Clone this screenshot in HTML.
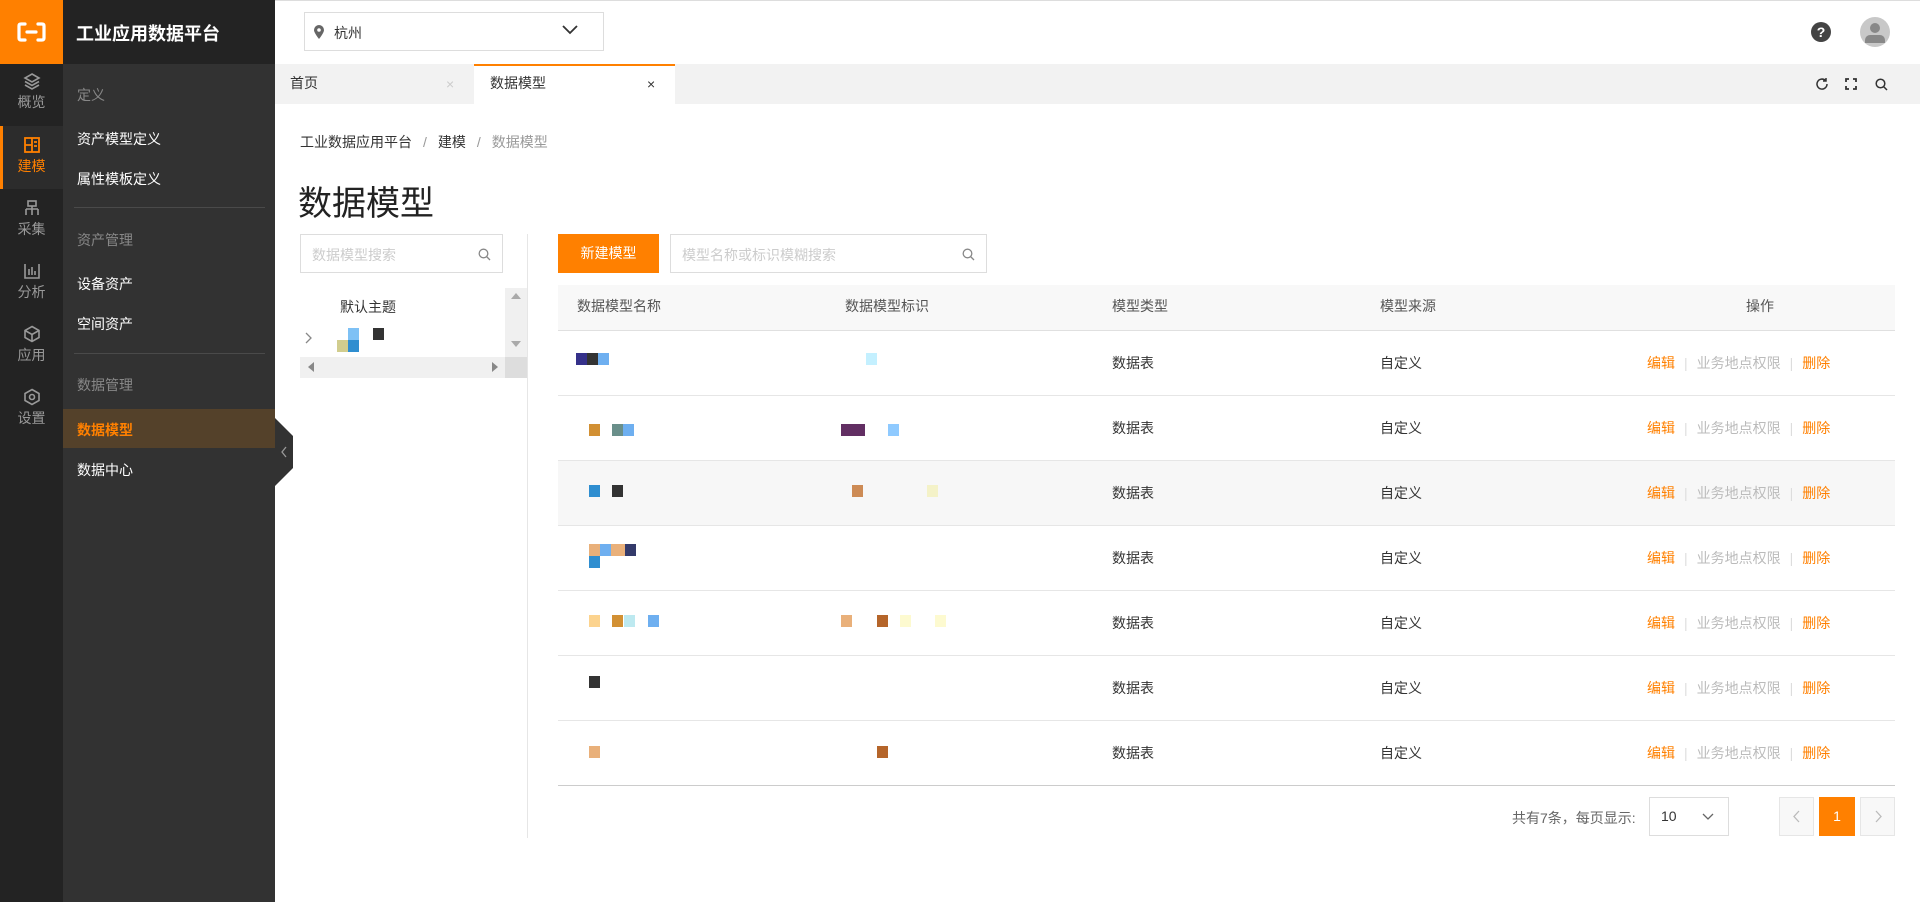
<!DOCTYPE html>
<html><head><meta charset="utf-8"><style>
*{margin:0;padding:0;box-sizing:border-box}
body{width:1920px;height:902px;position:relative;overflow:hidden;background:#fff;font-family:"Liberation Sans","Noto Sans CJK SC",sans-serif;font-size:14px;color:#333}
.a{position:absolute}
.ic{position:absolute;left:0;width:63px;text-align:center;color:#999;font-size:14px}
.ic svg{display:block;margin:0 auto 2px}
.nv{position:absolute;left:77px;color:#fff;font-size:14px}
.gl{position:absolute;left:77px;color:#888;font-size:14px}
.row{position:absolute;left:558px;width:1337px;height:65px;border-bottom:1px solid #e6e6e6}
.row span{position:absolute;top:22px}
.o{color:#ff8000;font-weight:normal}.g{color:#bbb;font-weight:normal}.sep{color:#ddd;margin:0 9px;font-style:normal}
.blk{position:absolute;width:11px;height:12px}
</style></head><body>
<div class="a" style="left:0;top:0;width:63px;height:902px;background:#232323"></div>
<div class="a" style="left:63px;top:0;width:212px;height:902px;background:#323232"></div>
<div class="a" style="left:63px;top:0;width:212px;height:64px;background:#232323"></div>
<div class="a" style="left:0;top:0;width:63px;height:64px;background:#ff8000"></div>
<svg class="a" style="left:16px;top:21px" width="31" height="22" viewBox="0 0 31 22"><path d="M9 3H5Q3 3 3 5V17Q3 19 5 19H9M22 3H26Q28 3 28 5V17Q28 19 26 19H22M11 11H20" stroke="#fff" stroke-width="3.2" fill="none" stroke-linecap="round"/></svg>
<div class="a" style="left:76px;top:20px;color:#fff;font-size:18px;font-weight:bold">工业应用数据平台</div>

<div class="ic" style="top:72px"><svg width="18" height="18" viewBox="0 0 18 18" fill="none" stroke="#999" stroke-width="1.6"><path d="M9 2L16 6L9 10L2 6Z"/><path d="M2 9.5L9 13.5L16 9.5M2 13L9 17L16 13"/></svg>概览</div>
<div class="a" style="left:0;top:126px;width:63px;height:63px;background:#2c2c2c;border-left:3px solid #ff8000"></div>
<div class="ic" style="top:136px;color:#ff8000"><svg width="18" height="18" viewBox="0 0 18 18" fill="none" stroke="#ff8000" stroke-width="1.8"><rect x="2" y="2" width="14" height="14"/><path d="M9 2V16M2 9H9M11 6H14M11 10H14"/></svg>建模</div>
<div class="ic" style="top:199px"><svg width="18" height="18" viewBox="0 0 18 18" fill="none" stroke="#999" stroke-width="1.6"><rect x="5" y="2" width="8" height="5"/><path d="M9 7V10M3 10H15M3 10V16M9 10V16M15 10V16"/></svg>采集</div>
<div class="ic" style="top:262px"><svg width="18" height="18" viewBox="0 0 18 18" fill="none" stroke="#999" stroke-width="1.6"><path d="M2 2V16H16V2M6 7V13M9 5V13M12 9V13"/></svg>分析</div>
<div class="ic" style="top:325px"><svg width="18" height="18" viewBox="0 0 18 18" fill="none" stroke="#999" stroke-width="1.6"><path d="M9 1.5L16 5.5V12.5L9 16.5L2 12.5V5.5Z M2 5.5L9 9.5L16 5.5M9 9.5V16.5"/></svg>应用</div>
<div class="ic" style="top:388px"><svg width="18" height="18" viewBox="0 0 18 18" fill="none" stroke="#999" stroke-width="1.6"><path d="M9 1.5L16 5.5V12.5L9 16.5L2 12.5V5.5Z"/><circle cx="9" cy="9" r="2.5"/></svg>设置</div>

<div class="gl" style="top:85px">定义</div>
<div class="nv" style="top:129px">资产模型定义</div>
<div class="nv" style="top:169px">属性模板定义</div>
<div class="a" style="left:74px;top:207px;width:191px;height:1px;background:#4a4a4a"></div>
<div class="gl" style="top:230px">资产管理</div>
<div class="nv" style="top:274px">设备资产</div>
<div class="nv" style="top:314px">空间资产</div>
<div class="a" style="left:74px;top:353px;width:191px;height:1px;background:#4a4a4a"></div>
<div class="gl" style="top:375px">数据管理</div>
<div class="a" style="left:63px;top:409px;width:212px;height:39px;background:#54412a"></div>
<div class="nv" style="top:420px;color:#ff8000;font-weight:bold">数据模型</div>
<div class="nv" style="top:460px">数据中心</div>
<svg class="a" style="left:275px;top:418px" width="20" height="68" viewBox="0 0 20 68"><path d="M0 0L18 18V50L0 68Z" fill="#323232"/><path d="M11 29L7 34L11 39" stroke="#999" stroke-width="1.3" fill="none"/></svg>

<div class="a" style="left:275px;top:0;width:1645px;height:1px;background:#ddd"></div>
<div class="a" style="left:304px;top:12px;width:300px;height:39px;border:1px solid #ddd"></div>
<svg class="a" style="left:314px;top:25px" width="10" height="14" viewBox="0 0 10 14"><path d="M5 0A5 5 0 0 0 0 5C0 8 5 14 5 14S10 8 10 5A5 5 0 0 0 5 0Z" fill="#666"/><circle cx="5" cy="5" r="1.8" fill="#fff"/></svg>
<div class="a" style="left:334px;top:23px;color:#333">杭州</div>
<svg class="a" style="left:562px;top:25px" width="16" height="10" viewBox="0 0 16 10"><path d="M1 1L8 8L15 1" stroke="#333" stroke-width="1.8" fill="none"/></svg>
<div class="a" style="left:1811px;top:22px;width:20px;height:20px;border-radius:50%;background:#444;color:#fff;font-weight:bold;font-size:14px;text-align:center;line-height:20px">?</div>
<div class="a" style="left:1860px;top:17px;width:30px;height:30px;border-radius:50%;background:#c8c8c8;overflow:hidden"><div class="a" style="left:10px;top:6px;width:10px;height:10px;border-radius:50%;background:#888"></div><div class="a" style="left:5px;top:18px;width:20px;height:8px;border-radius:5px 5px 0 0;background:#888"></div></div>

<div class="a" style="left:275px;top:64px;width:1645px;height:40px;background:#f2f2f2"></div>
<div class="a" style="left:290px;top:73px;color:#333">首页</div>
<div class="a" style="left:446px;top:76px;color:#ccc;font-size:14px">×</div>
<div class="a" style="left:474px;top:64px;width:201px;height:40px;background:#fff;border-top:2px solid #ff8000"></div>
<div class="a" style="left:490px;top:73px;color:#333">数据模型</div>
<div class="a" style="left:647px;top:76px;color:#333;font-size:14px">×</div>
<svg class="a" style="left:1815px;top:77px" width="14" height="14" viewBox="0 0 14 14" fill="none" stroke="#333" stroke-width="1.5"><path d="M12 7A5 5 0 1 1 10.5 3.5M11 1V4H8"/></svg>
<svg class="a" style="left:1845px;top:78px" width="12" height="12" viewBox="0 0 12 12" fill="none" stroke="#333" stroke-width="1.8"><path d="M1 4V1H4M8 1H11V4M11 8V11H8M4 11H1V8"/></svg>
<svg class="a" style="left:1875px;top:78px" width="13" height="13" viewBox="0 0 13 13" fill="none" stroke="#333" stroke-width="1.5"><circle cx="5.5" cy="5.5" r="4.3"/><path d="M8.5 8.5L12 12"/></svg>

<div class="a" style="left:300px;top:132px;color:#333">工业数据应用平台<span style="color:#999;margin:0 11px">/</span>建模<span style="color:#999;margin:0 11px">/</span><span style="color:#999">数据模型</span></div>
<div class="a" style="left:298px;top:176px;font-size:34px;color:#222">数据模型</div>

<div class="a" style="left:300px;top:234px;width:203px;height:39px;border:1px solid #ddd"></div>
<div class="a" style="left:312px;top:245px;color:#ccc">数据模型搜索</div>
<svg class="a" style="left:478px;top:248px" width="13" height="13" viewBox="0 0 13 13" fill="none" stroke="#888" stroke-width="1.3"><circle cx="5.5" cy="5.5" r="4.3"/><path d="M8.5 8.5L12 12"/></svg>
<div class="a" style="left:527px;top:234px;width:1px;height:604px;background:#e6e6e6"></div>
<div class="a" style="left:505px;top:288px;width:22px;height:90px;background:#f0f0f0"></div>
<div class="a" style="left:300px;top:357px;width:227px;height:21px;background:#f0f0f0"></div>
<div class="a" style="left:505px;top:357px;width:22px;height:21px;background:#ddd"></div>
<div class="a" style="left:511px;top:293px;border:5px solid transparent;border-bottom:6px solid #aaa;border-top:0"></div>
<div class="a" style="left:511px;top:341px;border:5px solid transparent;border-top:6px solid #aaa;border-bottom:0"></div>
<div class="a" style="left:308px;top:362px;border:5px solid transparent;border-right:6px solid #888;border-left:0"></div>
<div class="a" style="left:492px;top:362px;border:5px solid transparent;border-left:6px solid #888;border-right:0"></div>
<div class="a" style="left:340px;top:297px;color:#333">默认主题</div>
<svg class="a" style="left:305px;top:332px" width="8" height="12" viewBox="0 0 8 12"><path d="M1 1L6 6L1 11" stroke="#888" stroke-width="1.3" fill="none"/></svg>
<div class="blk" style="left:348px;top:328px;background:#7ec1f5"></div><div class="blk" style="left:373px;top:328px;background:#333"></div><div class="blk" style="left:337px;top:340px;background:#d1cd8e"></div><div class="blk" style="left:348px;top:340px;background:#2f8ed0"></div>

<div class="a" style="left:558px;top:234px;width:101px;height:39px;background:#ff8000;color:#fff;text-align:center;line-height:39px">新建模型</div>
<div class="a" style="left:670px;top:234px;width:317px;height:39px;border:1px solid #ddd"></div>
<div class="a" style="left:682px;top:245px;color:#ccc">模型名称或标识模糊搜索</div>
<svg class="a" style="left:962px;top:248px" width="13" height="13" viewBox="0 0 13 13" fill="none" stroke="#888" stroke-width="1.3"><circle cx="5.5" cy="5.5" r="4.3"/><path d="M8.5 8.5L12 12"/></svg>

<div class="a" style="left:558px;top:285px;width:1337px;height:46px;background:#f8f8f8;border-bottom:1px solid #e0e0e0"></div>
<div class="a" style="left:577px;top:296px;color:#555">数据模型名称</div>
<div class="a" style="left:845px;top:296px;color:#555">数据模型标识</div>
<div class="a" style="left:1112px;top:296px;color:#555">模型类型</div>
<div class="a" style="left:1380px;top:296px;color:#555">模型来源</div>
<div class="a" style="left:1746px;top:296px;color:#555">操作</div>

<div class="row" style="top:331px"><span style="left:554px">数据表</span><span style="left:822px">自定义</span><span style="left:1089px"><b class="o">编辑</b><i class="sep">|</i><b class="g">业务地点权限</b><i class="sep">|</i><b class="o">删除</b></span></div>
<div class="row" style="top:396px"><span style="left:554px">数据表</span><span style="left:822px">自定义</span><span style="left:1089px"><b class="o">编辑</b><i class="sep">|</i><b class="g">业务地点权限</b><i class="sep">|</i><b class="o">删除</b></span></div>
<div class="row" style="top:461px;background:#f7f7f7"><span style="left:554px">数据表</span><span style="left:822px">自定义</span><span style="left:1089px"><b class="o">编辑</b><i class="sep">|</i><b class="g">业务地点权限</b><i class="sep">|</i><b class="o">删除</b></span></div>
<div class="row" style="top:526px"><span style="left:554px">数据表</span><span style="left:822px">自定义</span><span style="left:1089px"><b class="o">编辑</b><i class="sep">|</i><b class="g">业务地点权限</b><i class="sep">|</i><b class="o">删除</b></span></div>
<div class="row" style="top:591px"><span style="left:554px">数据表</span><span style="left:822px">自定义</span><span style="left:1089px"><b class="o">编辑</b><i class="sep">|</i><b class="g">业务地点权限</b><i class="sep">|</i><b class="o">删除</b></span></div>
<div class="row" style="top:656px"><span style="left:554px">数据表</span><span style="left:822px">自定义</span><span style="left:1089px"><b class="o">编辑</b><i class="sep">|</i><b class="g">业务地点权限</b><i class="sep">|</i><b class="o">删除</b></span></div>
<div class="row" style="top:721px;border-bottom:1px solid #ccc"><span style="left:554px">数据表</span><span style="left:822px">自定义</span><span style="left:1089px"><b class="o">编辑</b><i class="sep">|</i><b class="g">业务地点权限</b><i class="sep">|</i><b class="o">删除</b></span></div>

<!-- pixel blocks -->
<div class="blk" style="left:576px;top:353px;background:#35318a"></div><div class="blk" style="left:587px;top:353px;background:#333"></div><div class="blk" style="left:598px;top:353px;background:#6eaff0"></div>
<div class="blk" style="left:866px;top:353px;background:#c4f0ff"></div>
<div class="blk" style="left:589px;top:424px;background:#d29033"></div><div class="blk" style="left:612px;top:424px;background:#6a8f8a"></div><div class="blk" style="left:623px;top:424px;background:#6eaff0"></div>
<div class="blk" style="left:841px;top:424px;width:24px;background:#622f63"></div><div class="blk" style="left:888px;top:424px;background:#8fcaff"></div>
<div class="blk" style="left:589px;top:485px;background:#2f8ed0"></div><div class="blk" style="left:612px;top:485px;background:#333"></div>
<div class="blk" style="left:852px;top:485px;background:#cd8b55"></div><div class="blk" style="left:927px;top:485px;background:#f4f2c8"></div>
<div class="blk" style="left:589px;top:544px;width:36px;background:#e9b07a"></div><div class="blk" style="left:600px;top:544px;background:#6eaff0"></div><div class="blk" style="left:625px;top:544px;background:#333a6a"></div><div class="blk" style="left:589px;top:556px;background:#2f8ed0"></div>
<div class="blk" style="left:589px;top:615px;background:#fcd38e"></div><div class="blk" style="left:612px;top:615px;background:#d29033"></div><div class="blk" style="left:624px;top:615px;background:#bde9f0"></div><div class="blk" style="left:648px;top:615px;background:#6eaff0"></div>
<div class="blk" style="left:841px;top:615px;background:#e9b07a"></div><div class="blk" style="left:877px;top:615px;background:#b5652a"></div><div class="blk" style="left:900px;top:615px;background:#fdfad0"></div><div class="blk" style="left:935px;top:615px;background:#fdfad0"></div>
<div class="blk" style="left:589px;top:676px;background:#333"></div>
<div class="blk" style="left:589px;top:746px;background:#e9b07a"></div><div class="blk" style="left:877px;top:746px;background:#b5652a"></div>

<div class="a" style="left:1512px;top:808px;color:#666">共有7条，每页显示:</div>
<div class="a" style="left:1649px;top:797px;width:80px;height:39px;border:1px solid #ddd"></div>
<div class="a" style="left:1661px;top:808px;color:#333">10</div>
<svg class="a" style="left:1702px;top:813px" width="12" height="8" viewBox="0 0 12 8"><path d="M1 1L6 6L11 1" stroke="#666" stroke-width="1.3" fill="none"/></svg>
<div class="a" style="left:1779px;top:797px;width:35px;height:39px;border:1px solid #e6e6e6;background:#f8f8f8"></div>
<svg class="a" style="left:1793px;top:810px" width="8" height="13" viewBox="0 0 8 13"><path d="M6 1L1 6.5L6 12" stroke="#bbb" stroke-width="1.3" fill="none"/></svg>
<div class="a" style="left:1819px;top:797px;width:36px;height:39px;background:#ff8000;color:#fff;text-align:center;line-height:39px">1</div>
<div class="a" style="left:1860px;top:797px;width:35px;height:39px;border:1px solid #e6e6e6;background:#f8f8f8"></div>
<svg class="a" style="left:1874px;top:810px" width="8" height="13" viewBox="0 0 8 13"><path d="M2 1L7 6.5L2 12" stroke="#bbb" stroke-width="1.3" fill="none"/></svg>
</body></html>
